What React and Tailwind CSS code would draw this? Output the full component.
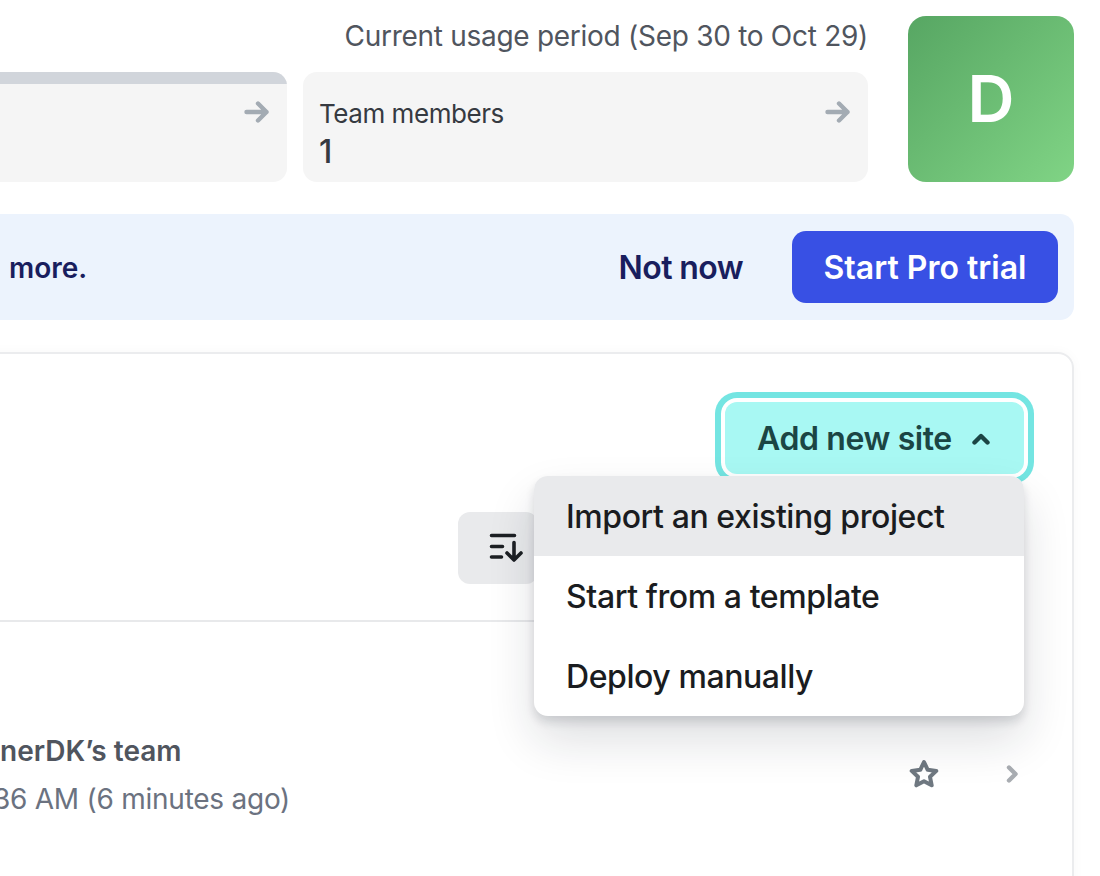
import React from 'react';

const MENU = ['Import an existing project', 'Start from a template', 'Deploy manually'];

function ArrowIcon() {
    return (
        <svg width="26" height="22" viewBox="0 0 26 22" fill="none" stroke="#a3abb3" strokeWidth="4.4" strokeLinecap="round" strokeLinejoin="round">
            <path d="M2.5 11h20M14 2.5l8.5 8.5-8.5 8.5" />
        </svg>
    );
}

function SortIcon() {
    return (
        <svg width="34" height="30" viewBox="0 0 34 30" fill="none" stroke="#1c1f23" strokeWidth="3.6" strokeLinecap="round" strokeLinejoin="round">
            <path d="M2.5 2.5h23M2.5 13.5h11M2.5 24h10M25 9.5v17.5M18 20l7 7 7-7" />
        </svg>
    );
}

function StarIcon() {
    return (
        <svg width="32" height="32" viewBox="0 0 32 32" fill="none" stroke="#6f7881" strokeWidth="4" strokeLinejoin="round">
            <path d="M16 4l3.7 7.8 8.6 1.1-6.3 5.9 1.7 8.5L16 23.2l-7.7 4.1 1.7-8.5-6.3-5.9 8.6-1.1z" />
        </svg>
    );
}

function Chevron({ d, stroke, w, h, sw }) {
    return (
        <svg width={w} height={h} viewBox={`0 0 ${w} ${h}`} fill="none" stroke={stroke} strokeWidth={sw} strokeLinecap="round" strokeLinejoin="round">
            <path d={d} />
        </svg>
    );
}

export default function App() {
    return (
        <div className="w-[1100px] h-[876px] overflow-hidden bg-white font-['Inter',sans-serif]">
            <div className="ml-[-300px] mr-[26px] pt-4 flex flex-col">
                {/* usage cards */}
                <div className="flex gap-10">
                    <div className="flex-1 flex flex-col">
                        <p className="h-14 text-right text-[28px] tracking-[-0.28px] leading-[40px] text-[#50555e] whitespace-nowrap">
                            Current usage period (Sep 30 to Oct 29)
                        </p>
                        <div className="flex gap-4 h-[110px]">
                            <div className="flex-1 rounded-r-[14px] bg-[#f5f5f5] overflow-hidden">
                                <div className="h-3 bg-[#d1d5db]" />
                                <div className="flex justify-end pt-[17px] pr-[17px]"><ArrowIcon /></div>
                            </div>
                            <div className="w-[565px] rounded-[14px] bg-[#f5f5f5] pl-4 pr-[17px] pt-[23px] flex justify-between">
                                <div className="text-[#363a41]">
                                    <p className="text-[26px] tracking-[-0.45px] leading-[37px]">Team members</p>
                                    <p className="text-[32px] font-medium leading-[40px]">1</p>
                                </div>
                                <div className="pt-[6px]"><ArrowIcon /></div>
                            </div>
                        </div>
                    </div>
                    <div className="w-[166px] h-[166px] rounded-[18px] bg-gradient-to-br from-[#57a663] to-[#80d485] flex items-center justify-center text-white text-[65px] font-semibold">
                        D
                    </div>
                </div>

                {/* trial banner */}
                <div className="mt-8 h-[106px] rounded-r-[14px] bg-[#ecf3fd] flex items-center justify-between pl-[309px] pr-4 text-[#191e5e]">
                    <span className="pt-[2px] text-[28px] font-semibold">more.</span>
                    <div className="flex items-center gap-[49px]">
                        <span className="pt-[2px] text-[32px] tracking-[-0.6px] font-semibold">Not now</span>
                        <button className="w-[266px] h-[72px] pt-[2px] rounded-[14px] bg-[#3850e4] text-white text-[32px] font-semibold">Start Pro trial</button>
                    </div>
                </div>

                {/* sites panel */}
                <div className="mt-8 h-[700px] rounded-tr-[16px] border-2 border-[#ebecee] shadow-[0_0_12px_rgba(0,0,0,0.03)]">
                    <div className="mr-[48px] h-[268px] border-b-2 border-[#e8e9eb] flex flex-col items-end pt-[48px]">
                        <div className="relative">
                            <button className="w-[299px] h-[72px] pt-[2px] pr-[2px] rounded-[12px] bg-[#a8f8f3] text-[#1b4544] text-[32px] tracking-[-0.4px] font-semibold flex items-center justify-center gap-5 shadow-[0_0_0_4px_#ffffff,0_0_0_10px_#74e5e2]">
                                Add new site
                                <Chevron d="M2.5 10.5L9 4l6.5 6.5" stroke="#1b4544" w={18} h={14} sw={4.4} />
                            </button>
                            <div className="absolute right-0 top-full mt-[2px] z-10 w-[490px] rounded-[14px] bg-white overflow-hidden shadow-[0_6px_10px_rgba(20,30,40,0.14),0_24px_48px_rgba(20,30,40,0.14)]">
                                {MENU.map((item, i) => (
                                    <div key={item} className={`h-20 pl-8 pt-[2px] flex items-center text-[32px] font-[450] tracking-[-0.42px] text-[#1a1c20] ${i === 0 ? 'bg-[#e9eaec]' : ''}`}>
                                        {item}
                                    </div>
                                ))}
                            </div>
                        </div>
                        <button className="mt-[38px] mr-[486px] w-[80px] h-[72px] rounded-[12px] bg-[#e9eaec] flex items-center pl-[31px]">
                            <SortIcon />
                        </button>
                    </div>

                    {/* site row */}
                    <div className="flex items-center justify-between pl-[300px] pr-[53px] pt-[109px]">
                        <div className="whitespace-nowrap">
                            <p className="ml-[-2px] text-[28px] leading-[40px] font-semibold text-[#50555e]">nerDK’s team</p>
                            <p className="mt-2 ml-[-9px] text-[28px] tracking-[-0.25px] leading-[40px] text-[#6b7280]">36 AM (6 minutes ago)</p>
                        </div>
                        <div className="flex items-center gap-[66px] pb-[2px]">
                            <StarIcon />
                            <Chevron d="M3 2.5l6.5 6.5L3 15.5" stroke="#a9adb2" w={13} h={18} sw={4.4} />
                        </div>
                    </div>
                </div>
            </div>
        </div>
    );
}
